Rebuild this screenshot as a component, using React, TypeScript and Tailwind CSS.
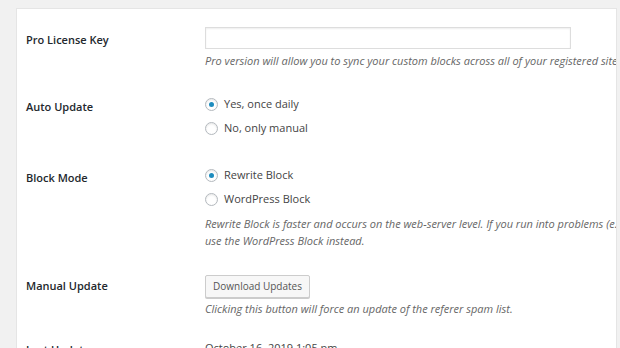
import { useState } from "react";

const font = { fontFamily: '"Open Sans", "Noto Sans", sans-serif' };

function Radio({ checked, label, onClick }: { checked: boolean; label: string; onClick: () => void }) {
  return (
    <label className="flex items-center h-[24px] cursor-pointer" onClick={onClick}>
      <span className="w-[13px] h-[13px] rounded-full border border-[#b4b9be] bg-white flex items-center justify-center shadow-[inset_0_1px_2px_rgba(0,0,0,0.1)]">
        {checked && <span className="w-[5px] h-[5px] rounded-full bg-[#1e8cbe]" />}
      </span>
      <span className="ml-[6px] text-[11px] text-[#444]">{label}</span>
    </label>
  );
}

export default function App() {
  const [autoUpdate, setAutoUpdate] = useState<"daily" | "manual">("daily");
  const [mode, setMode] = useState<"rewrite" | "wordpress">("rewrite");

  return (
    <div className="w-[620px] h-[348px] overflow-hidden bg-[#f1f1f1] pt-[8px] pl-[16px]" style={font}>
      <div className="w-[601px] h-[400px] bg-white border-l border-t border-r border-[#e5e5e5] pl-[9px] overflow-hidden">
        {/* Pro License Key */}
        <div className="flex pt-[18px]">
          <div className="w-[179px] shrink-0 mt-[5px] leading-[16px] text-[11px] font-semibold text-[#23282d]">
            Pro License Key
          </div>
          <div className="min-w-0">
            <input
              type="text"
              className="block w-[366px] h-[22px] border border-[#ddd] bg-white outline-none shadow-[inset_0_1px_2px_rgba(0,0,0,0.07)]"
            />
            <p className="mt-[4px] leading-[16px] text-[11px] italic text-[#666] whitespace-nowrap">
              Pro version will allow you to sync your custom blocks across all of your registered sites.
            </p>
          </div>
        </div>

        {/* Auto Update */}
        <div className="flex pt-[23px]">
          <div className="w-[179px] shrink-0 mt-[7px] leading-[16px] text-[11px] font-semibold text-[#23282d]">
            Auto Update
          </div>
          <div>
            <Radio checked={autoUpdate === "daily"} label="Yes, once daily" onClick={() => setAutoUpdate("daily")} />
            <Radio checked={autoUpdate === "manual"} label="No, only manual" onClick={() => setAutoUpdate("manual")} />
          </div>
        </div>

        {/* Block Mode */}
        <div className="flex pt-[23px]">
          <div className="w-[179px] shrink-0 mt-[7px] leading-[16px] text-[11px] font-semibold text-[#23282d]">
            Block Mode
          </div>
          <div className="min-w-0">
            <Radio checked={mode === "rewrite"} label="Rewrite Block" onClick={() => setMode("rewrite")} />
            <Radio checked={mode === "wordpress"} label="WordPress Block" onClick={() => setMode("wordpress")} />
            <p className="mt-[4px] leading-[17px] text-[11px] italic text-[#666] whitespace-nowrap">
              Rewrite Block is faster and occurs on the web-server level. If you run into problems (e.g. 404 errors),
              <br />
              use the WordPress Block instead.
            </p>
          </div>
        </div>

        {/* Manual Update */}
        <div className="flex pt-[23px]">
          <div className="w-[179px] shrink-0 mt-[6px] leading-[16px] text-[11px] font-semibold text-[#23282d]">
            Manual Update
          </div>
          <div>
            <button className="h-[23px] px-[7px] border border-[#ccc] bg-[#f7f7f7] rounded-[2px] text-[10px] text-[#555] shadow-[0_1px_0_#ccc]">
              Download Updates
            </button>
            <p className="mt-[3px] leading-[16px] text-[11px] italic text-[#666]">
              Clicking this button will force an update of the referer spam list.
            </p>
          </div>
        </div>

        {/* Last Update */}
        <div className="flex pt-[21px]">
          <div className="w-[179px] shrink-0 mt-[4px] leading-[16px] text-[11px] font-semibold text-[#23282d]">
            Last Update
          </div>
          <div className="leading-[20px] text-[11px] text-[#444]">October 16, 2019 1:05 pm</div>
        </div>
      </div>
    </div>
  );
}
